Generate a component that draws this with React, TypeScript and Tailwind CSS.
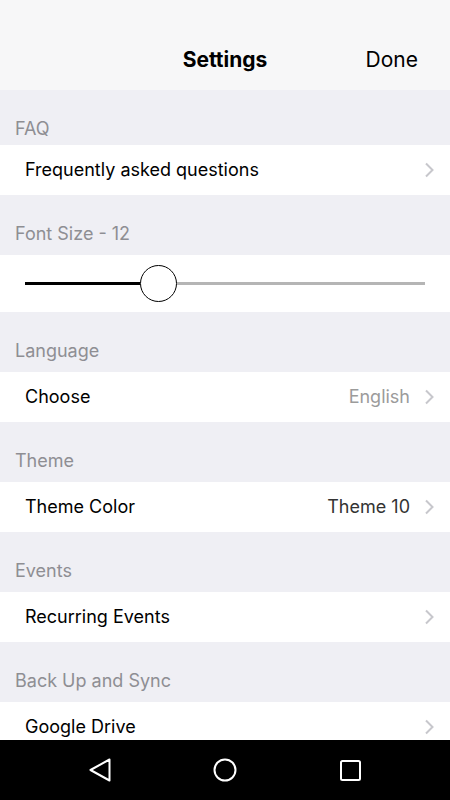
import React from "react";

function Chevron() {
  return (
    <svg width="11" height="16" viewBox="0 0 11 16" className="shrink-0">
      <path d="M2 1.5 L8.5 8 L2 14.5" fill="none" stroke="#c7c7cc" strokeWidth="2" />
    </svg>
  );
}

function SectionHeader({ title }: { title: string }) {
  return (
    <div className="h-[60px] shrink-0 flex items-end pb-[8px] px-[15px] bg-[#efeff4] text-[18px] text-[#8e8e93]">
      {title}
    </div>
  );
}

function Row({ label, value, valueColor }: { label: string; value?: string; valueColor?: string }) {
  return (
    <div className="h-[50px] shrink-0 flex items-center bg-white pl-[25px] pr-[15px] text-[18px] text-black">
      <span className="flex-1 -mt-[2px]">{label}</span>
      {value && <span className={`mr-[14px] -mt-[2px] ${valueColor}`}>{value}</span>}
      <Chevron />
    </div>
  );
}

export default function App() {
  return (
    <div className="w-[450px] h-[800px] flex flex-col overflow-hidden bg-[#efeff4]" style={{ fontFamily: "Inter, Roboto, 'Noto Sans', sans-serif" }}>
      <div className="flex-1 flex flex-col overflow-hidden">
        <div className="h-[90px] shrink-0 bg-[#f7f7f8] relative flex items-end pb-[15px]">
          <div className="flex-1 text-center text-[21px] font-bold text-black">Settings</div>
          <div className="absolute right-[32px] bottom-[15px] text-[21px] text-black">Done</div>
        </div>
        <div className="h-[55px] shrink-0 flex items-end pb-[3px] px-[15px] bg-[#efeff4] text-[18px] text-[#8e8e93]">FAQ</div>
        <Row label="Frequently asked questions" />
        <SectionHeader title="Font Size - 12" />
        <div className="h-[57px] shrink-0 bg-white flex items-center px-[25px]">
          <div className="flex-1 flex items-center">
            <div className="w-[115px] h-[3px] bg-black" />
            <div className="w-[37px] h-[37px] rounded-full border-[1.5px] border-black bg-white shrink-0" />
            <div className="flex-1 h-[3px] bg-[#b5b5b5]" />
          </div>
        </div>
        <SectionHeader title="Language" />
        <Row label="Choose" value="English" valueColor="text-[#9b9b9b]" />
        <SectionHeader title="Theme" />
        <Row label="Theme Color" value="Theme 10" valueColor="text-[#333333]" />
        <SectionHeader title="Events" />
        <Row label="Recurring Events" />
        <SectionHeader title="Back Up and Sync" />
        <Row label="Google Drive" />
      </div>
      <div className="h-[60px] shrink-0 bg-black flex items-center pl-[89px]">
        <svg width="22" height="24" viewBox="0 0 22 24" className="shrink-0">
          <path d="M20.5 1.5 L1.5 12 L20.5 22.5 Z" fill="none" stroke="white" strokeWidth="2" strokeLinejoin="round" />
        </svg>
        <svg width="24" height="24" viewBox="0 0 24 24" className="shrink-0 ml-[102px]">
          <circle cx="12" cy="12" r="10.5" fill="none" stroke="white" strokeWidth="2" />
        </svg>
        <svg width="21" height="21" viewBox="0 0 21 21" className="shrink-0 ml-[103px]">
          <rect x="1" y="1" width="19" height="19" rx="1.5" fill="none" stroke="white" strokeWidth="2" />
        </svg>
      </div>
    </div>
  );
}
